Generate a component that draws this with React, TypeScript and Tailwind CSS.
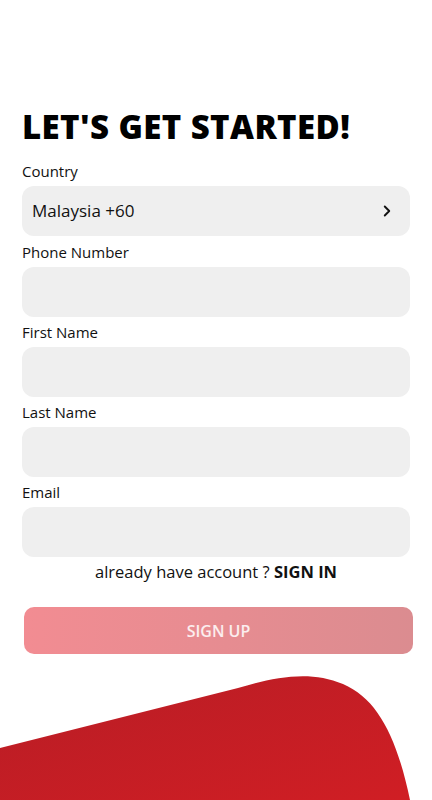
import { ChevronRight } from "lucide-react";

const fields = ["Phone Number", "First Name", "Last Name", "Email"];

function Label({ text }: { text: string }) {
  return (
    <div className="flex h-[30px] items-center text-[15px] leading-none text-[#111]">
      {text}
    </div>
  );
}

function Field({ children }: { children?: React.ReactNode }) {
  return (
    <div className="flex h-[50px] items-center justify-between rounded-[12px] bg-[#efefef] pl-[10px] pr-[14px]">
      {children}
    </div>
  );
}

export default function App() {
  return (
    <div
      className="relative h-[800px] w-[432px] overflow-hidden bg-white"
      style={{ fontFamily: "'Open Sans', 'Noto Sans', sans-serif" }}
    >
      <div className="flex flex-col pl-[22px] pr-[22px] pt-[104px]">
        <h1 className="h-[52px] text-[33px] font-extrabold leading-[46px] tracking-[0.4px] text-black">
          LET'S GET STARTED!
        </h1>

        <Label text="Country" />
        <Field>
          <span className="text-[17px] text-[#111]">Malaysia +60</span>
          <ChevronRight size={18} strokeWidth={2.5} className="text-[#111]" />
        </Field>

        {fields.map((f, i) => (
          <div key={f} className="flex flex-col">
            <div className={i === 0 ? "pt-px" : ""}>
              <Label text={f} />
            </div>
            <Field />
          </div>
        ))}

        <p className="flex h-[30px] items-center justify-center text-[16.5px] text-[#111]">
          already have account ?&nbsp;<span className="font-bold">SIGN IN</span>
        </p>

        <button
          type="button"
          className="ml-[2px] mr-[-3px] mt-[20px] h-[47px] rounded-[10px] bg-gradient-to-r from-[#f28c92] to-[#db8c90] text-[16px] font-semibold text-white/85"
        >
          SIGN UP
        </button>
      </div>

      <svg
        className="absolute bottom-0 left-0"
        width="432"
        height="140"
        viewBox="0 660 432 140"
      >
        <defs>
          <linearGradient id="red" x1="0" y1="0" x2="1" y2="1">
            <stop offset="0" stopColor="#b81d25" />
            <stop offset="1" stopColor="#d01e24" />
          </linearGradient>
        </defs>
        <path
          d="M0 748 L238 688 C275 677 310 670 343 684 C378 699 397 738 410 800 L0 800 Z"
          fill="url(#red)"
        />
      </svg>
    </div>
  );
}
